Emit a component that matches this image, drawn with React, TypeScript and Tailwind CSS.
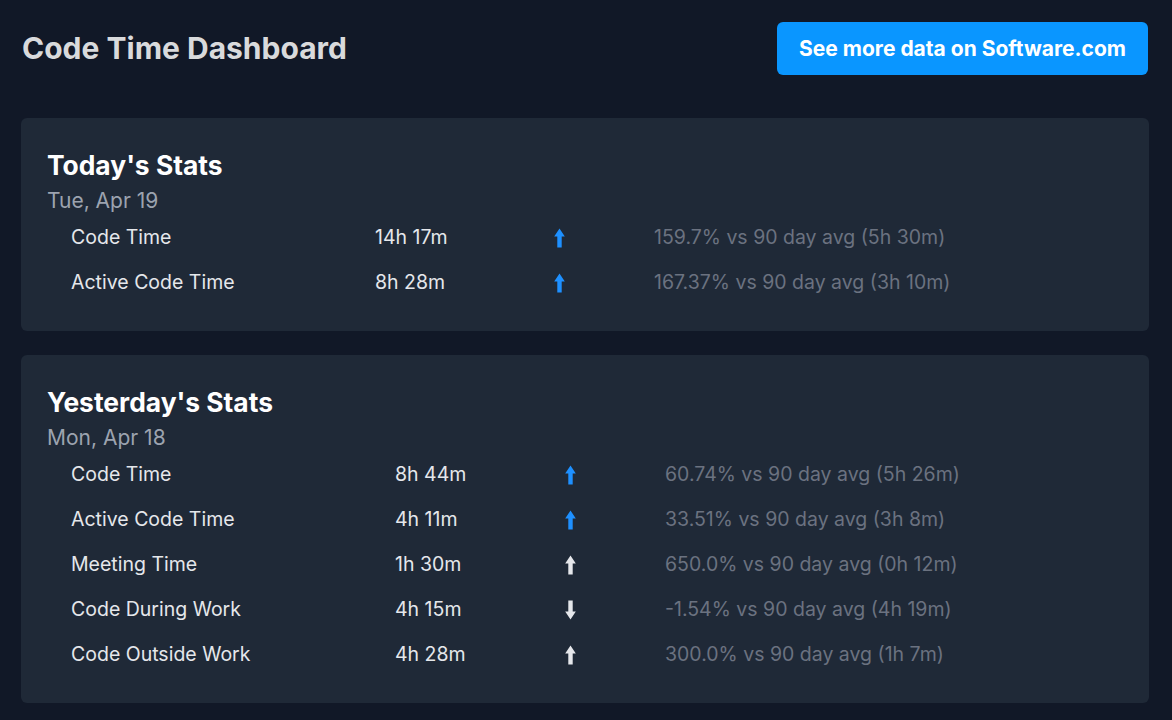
type Stat = {
  label: string;
  value: string;
  dir: "up" | "down";
  blue: boolean;
  compare: string;
};

const today: Stat[] = [
  { label: "Code Time", value: "14h 17m", dir: "up", blue: true, compare: "159.7% vs 90 day avg (5h 30m)" },
  { label: "Active Code Time", value: "8h 28m", dir: "up", blue: true, compare: "167.37% vs 90 day avg (3h 10m)" },
];

const yesterday: Stat[] = [
  { label: "Code Time", value: "8h 44m", dir: "up", blue: true, compare: "60.74% vs 90 day avg (5h 26m)" },
  { label: "Active Code Time", value: "4h 11m", dir: "up", blue: true, compare: "33.51% vs 90 day avg (3h 8m)" },
  { label: "Meeting Time", value: "1h 30m", dir: "up", blue: false, compare: "650.0% vs 90 day avg (0h 12m)" },
  { label: "Code During Work", value: "4h 15m", dir: "down", blue: false, compare: "-1.54% vs 90 day avg (4h 19m)" },
  { label: "Code Outside Work", value: "4h 28m", dir: "up", blue: false, compare: "300.0% vs 90 day avg (1h 7m)" },
];

function Arrow({ dir, blue }: { dir: "up" | "down"; blue: boolean }) {
  return (
    <svg
      width="11"
      height="20"
      viewBox="0 0 11 20"
      className={blue ? "text-[#1e90ff]" : "text-[#e5e7eb]"}
      style={dir === "down" ? { transform: "rotate(180deg)" } : undefined}
    >
      <path d="M5.5 0.5 L10.8 8.5 L7.7 8.5 L7.7 19.5 L3.3 19.5 L3.3 8.5 L0.2 8.5 Z" fill="currentColor" />
    </svg>
  );
}

function StatsCard({ title, date, rows, cols }: { title: string; date: string; rows: Stat[]; cols: string }) {
  return (
    <div className="bg-[#1f2937] rounded-md px-[26px] pt-8 pb-[26px]">
      <h2 className="text-[26.4px] leading-[31px] font-bold text-white">{title}</h2>
      <div className="mt-[6px] text-[21px] leading-7 text-[#9ca3af]">{date}</div>
      <div className="pl-6">
        {rows.map((r) => (
          <div key={r.label} className={`grid ${cols} items-center h-[45px] text-[19.5px] text-[#e5e7eb]`}>
            <div>{r.label}</div>
            <div>{r.value}</div>
            <div className="flex">
              <Arrow dir={r.dir} blue={r.blue} />
            </div>
            <div className="text-[#6b7280]">{r.compare}</div>
          </div>
        ))}
      </div>
    </div>
  );
}

export default function App() {
  return (
    <div className="min-h-[720px] bg-[#111827] pl-[21px] pr-[23px] pt-[22px] pb-4 font-['Inter',sans-serif]">
      <div className="flex items-center justify-between pr-px">
        <h1 className="pl-px text-[30px] font-bold text-[#d9dadc]">Code Time Dashboard</h1>
        <a
          href="#"
          className="flex items-center justify-center h-[53px] w-[371px] rounded-md bg-[#0a96ff] text-[21px] font-bold text-white"
        >
          See more data on Software.com
        </a>
      </div>
      <div className="mt-[43px] flex flex-col gap-6">
        <StatsCard title="Today's Stats" date="Tue, Apr 19" rows={today} cols="grid-cols-[304px_179px_100px_1fr]" />
        <StatsCard title="Yesterday's Stats" date="Mon, Apr 18" rows={yesterday} cols="grid-cols-[324px_170px_100px_1fr]" />
      </div>
    </div>
  );
}
